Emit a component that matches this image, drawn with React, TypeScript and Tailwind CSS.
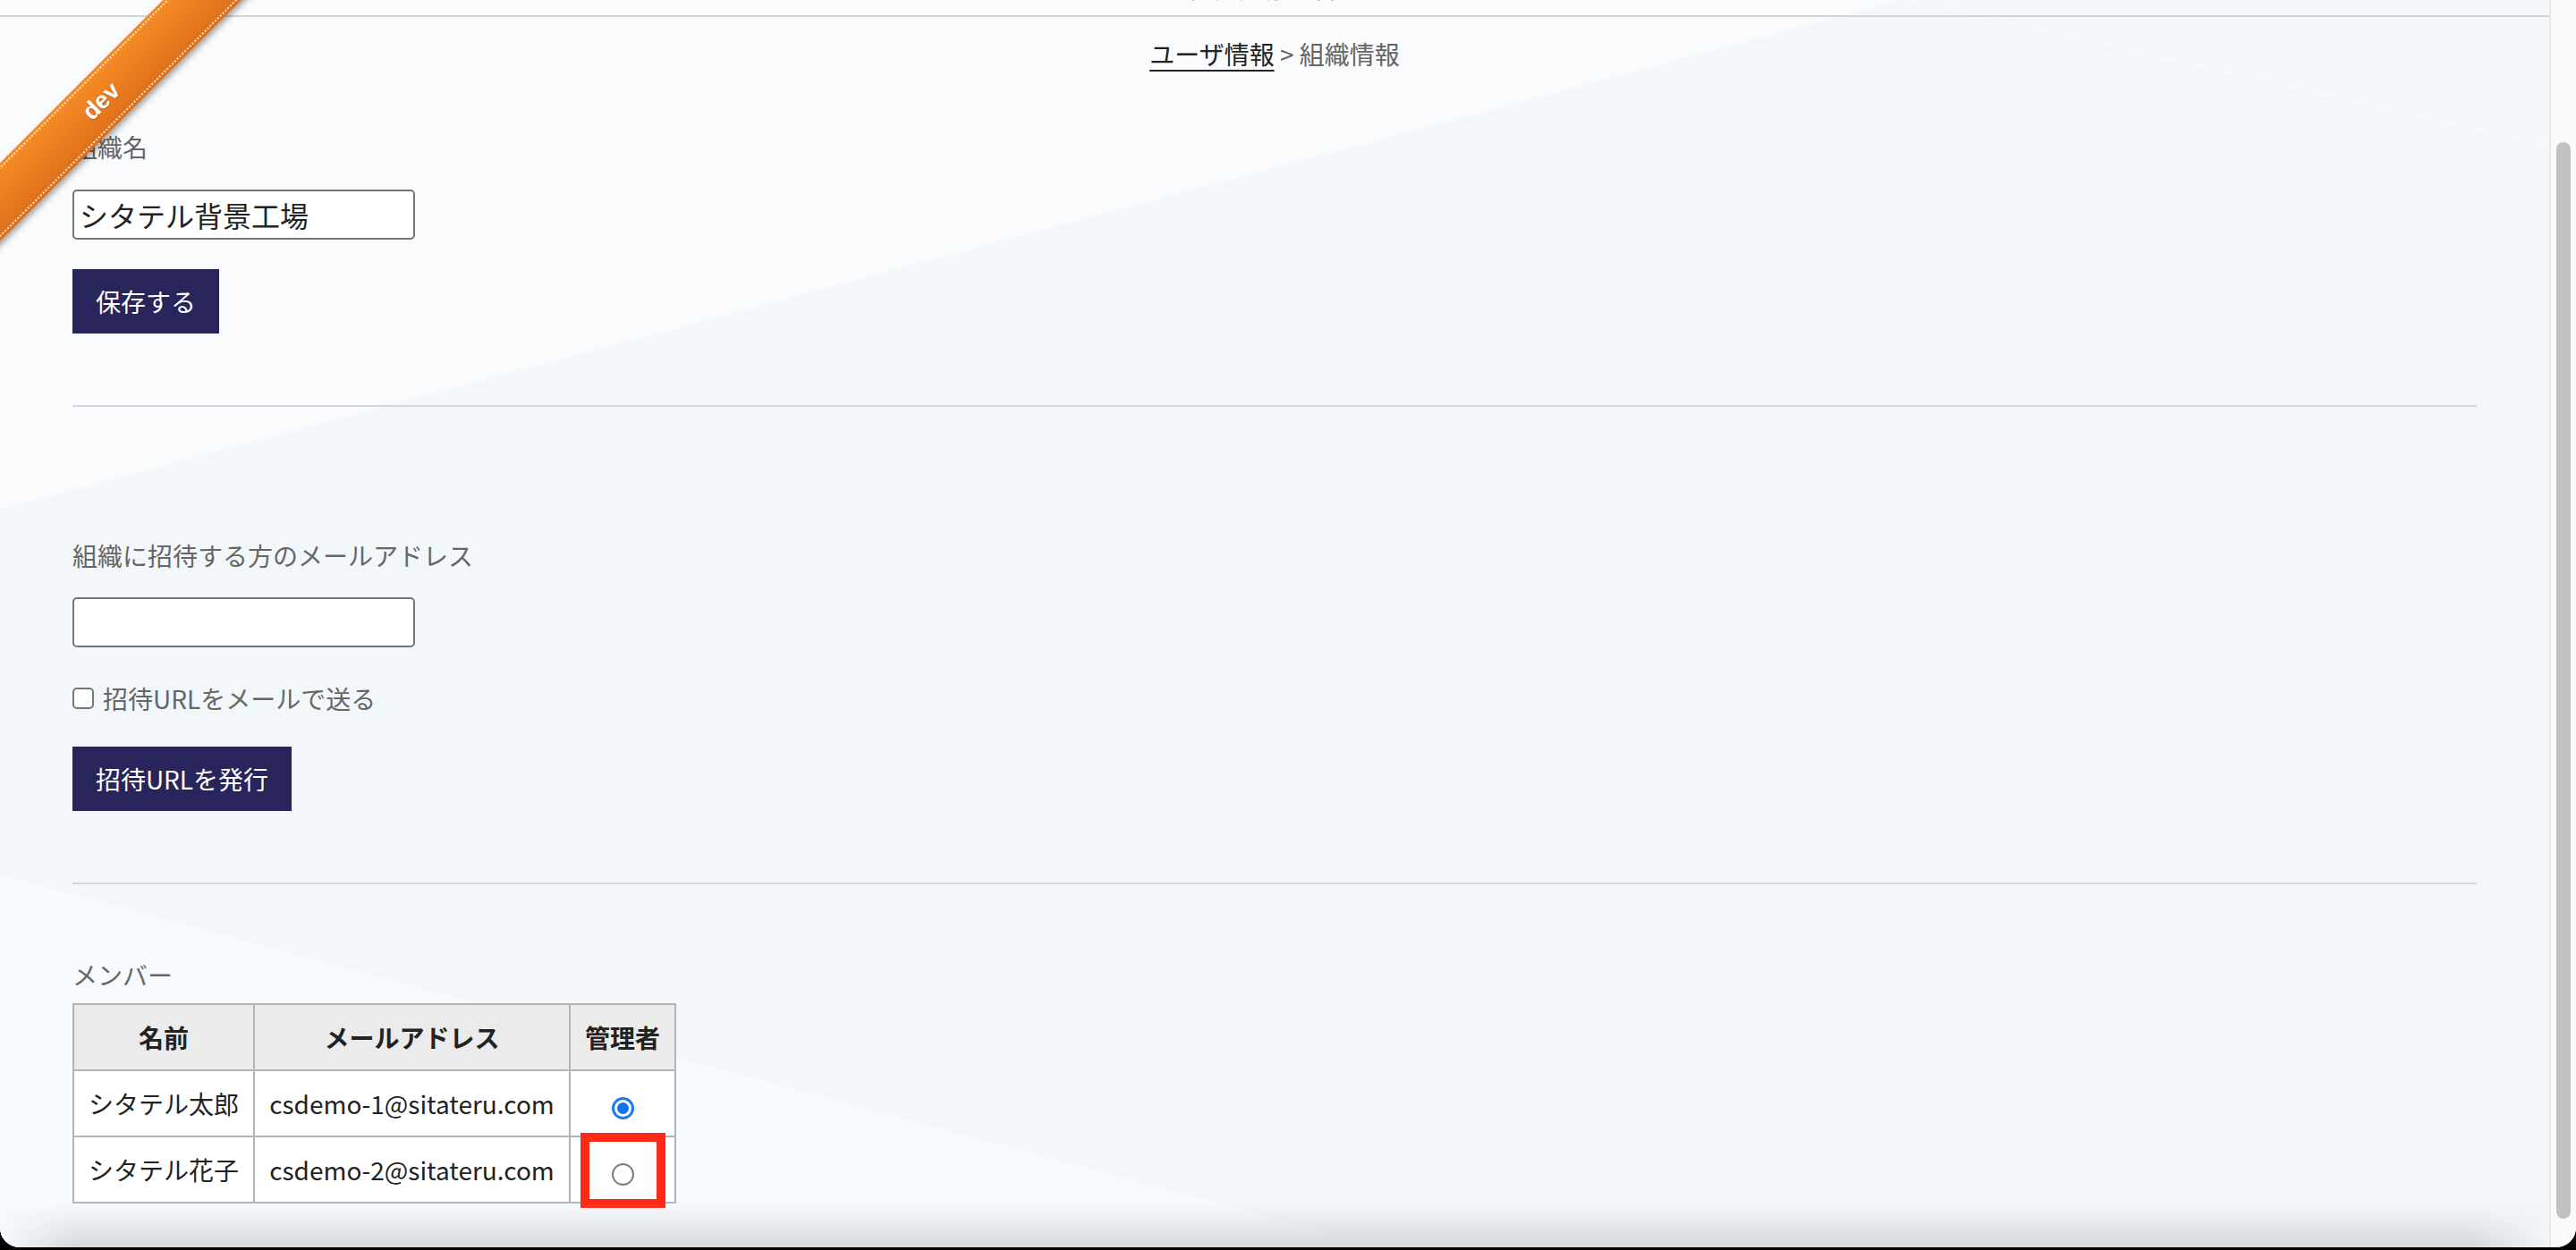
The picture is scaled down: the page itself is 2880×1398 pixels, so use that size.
import React from 'react';

const members = [
  { name: 'シタテル太郎', email: 'csdemo-1@sitateru.com', admin: true },
  { name: 'シタテル花子', email: 'csdemo-2@sitateru.com', admin: false },
];

function Radio({ checked }: { checked: boolean }) {
  if (checked) {
    return (
      <span className="inline-block w-[25px] h-[25px] rounded-full bg-[#1a7bf4] p-[3px] align-middle">
        <span className="block w-full h-full rounded-full bg-white p-[3px]">
          <span className="block w-full h-full rounded-full bg-[#1271ef]" />
        </span>
      </span>
    );
  }
  return <span className="inline-block w-[25px] h-[25px] rounded-full border-2 border-[#7d7d7d] bg-white align-middle" />;
}

function DevRibbon() {
  return (
    <div className="absolute left-[-137px] top-[82px] w-[500px] h-[62px] -rotate-45 bg-gradient-to-b from-[#f88c24] to-[#de6f1a] shadow-[0_4px_6px_rgba(0,0,0,0.35)] z-20">
      <div className="mt-[3px] h-[56px] border-y-2 border-dotted border-white/80 flex items-center justify-center">
        <span className="font-['Liberation_Sans',sans-serif] font-bold text-[27px] text-white [text-shadow:0_1px_1px_rgba(0,0,0,0.3)]">dev</span>
      </div>
    </div>
  );
}

export default function App() {
  return (
    <div className="w-full h-[1398px] bg-black overflow-hidden font-['Noto_Sans_CJK_JP',sans-serif]">
      <div className="h-[1395px] flex rounded-b-[22px] overflow-hidden bg-[#f9fbfd]">
        <div className="relative flex-1 min-w-0">
          <svg className="absolute inset-0 w-full h-full" viewBox="0 0 2850 1395" preserveAspectRatio="none">
            <rect width="2850" height="1395" fill="#f2f7f9" />
            <polygon points="0,0 2126,0 0,570" fill="#f9fbfd" />
            <polygon points="2126,0 2850,0 2850,165" fill="#f6f9fc" />
            <polygon points="0,978 0,1395 1544,1395" fill="#f7fafc" />
          </svg>

          <DevRibbon />

          <div className="relative">
            <div className="h-[17px] border-b-2 border-[#d4d4d4] box-content overflow-hidden flex justify-center">
              <span className="mt-[-34px] text-[28px] leading-[40px] text-[#777]">組織情報の管理</span>
            </div>

            <div className="px-[81px]">
              <div className="mt-[21px] text-center text-[28px] leading-[40px] text-[#666]">
                <span className="text-[#222] underline decoration-2 underline-offset-[6px]">ユーザ情報</span> &gt; 組織情報
              </div>

              <div className="mt-[64px] text-[28px] leading-[40px] text-[#666]">組織名</div>
              <input
                defaultValue="シタテル背景工場"
                className="mt-[28px] block w-[383px] h-[56px] px-[6px] border-2 border-[#767676] rounded-[5px] bg-white text-[32px] text-[#222] outline-none"
              />
              <button className="mt-[33px] block w-[164px] h-[72px] bg-[#27255b] text-white text-[28px] leading-[40px]">保存する</button>

              <div className="mt-[80px] h-[2px] bg-[#d3d6da]" />

              <div className="mt-[146px] text-[28px] leading-[40px] text-[#666]">組織に招待する方のメールアドレス</div>
              <input className="mt-[27px] block w-[383px] h-[56px] px-[6px] border-2 border-[#767676] rounded-[5px] bg-white text-[32px] outline-none" />
              <label className="mt-[37px] flex items-center gap-[10px] h-[40px] text-[28px] leading-[40px] text-[#666]">
                <span className="w-[24px] h-[24px] rounded-[5px] border-2 border-[#767676] bg-white" />
                招待URLをメールで送る
              </label>
              <button className="mt-[34px] block w-[245px] h-[72px] bg-[#27255b] text-white text-[28px] leading-[40px]">招待URLを発行</button>

              <div className="mt-[80px] h-[2px] bg-[#d3d6da]" />

              <div className="mt-[81px] text-[28px] leading-[40px] text-[#666]">メンバー</div>
              <div className="relative mt-[12px] w-[673px]">
                <table className="w-[673px] table-fixed border-collapse text-[28px] text-[#222]">
                  <colgroup>
                    <col className="w-[202px]" />
                    <col className="w-[353px]" />
                    <col className="w-[118px]" />
                  </colgroup>
                  <thead>
                    <tr className="bg-[#ebebeb]">
                      <th className="h-[74px] border-2 border-[#b4b4b4] font-bold">名前</th>
                      <th className="h-[74px] border-2 border-[#b4b4b4] font-bold">メールアドレス</th>
                      <th className="h-[74px] border-2 border-[#b4b4b4] font-bold">管理者</th>
                    </tr>
                  </thead>
                  <tbody>
                    {members.map((m) => (
                      <tr key={m.email} className="bg-white">
                        <td className="h-[74px] border-2 border-[#b4b4b4] text-center">{m.name}</td>
                        <td className="h-[74px] border-2 border-[#b4b4b4] text-center">{m.email}</td>
                        <td className="h-[74px] border-2 border-[#b4b4b4] text-center pt-[2px]"><Radio checked={m.admin} /></td>
                      </tr>
                    ))}
                  </tbody>
                </table>
                <div className="absolute left-[568px] top-[145px] w-[95px] h-[84px] border-[10px] border-[#ff2a16]" />
              </div>
            </div>
          </div>

          <div className="absolute inset-x-0 bottom-0 h-[48px] bg-gradient-to-b from-transparent to-[#d3d8dc] [mask-image:linear-gradient(to_right,transparent,black_3%,black_97%,transparent)] pointer-events-none" />
        </div>

        <div className="w-[30px] shrink-0 border-l-2 border-[#e8e8e8] bg-[#fafafa] pt-[159px]">
          <div className="mx-auto w-[16px] h-[1204px] rounded-full bg-[#c1c1c1]" />
        </div>
      </div>
    </div>
  );
}
